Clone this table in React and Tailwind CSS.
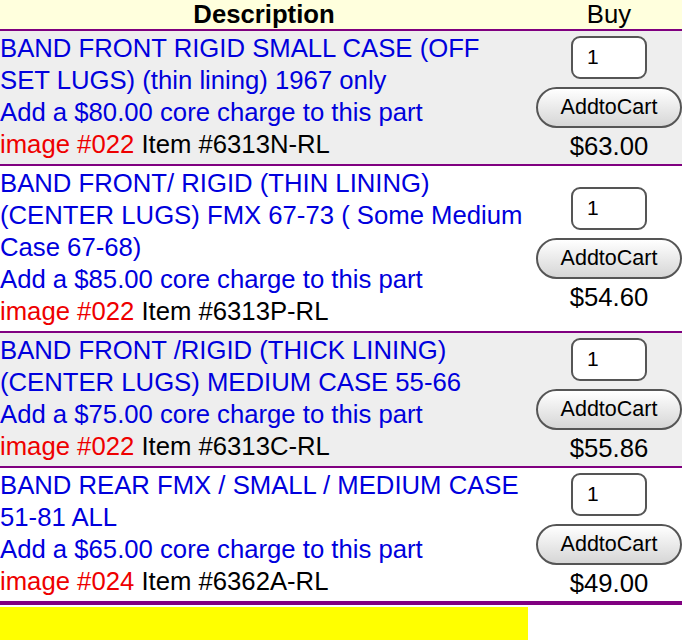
const items = [
  {
    title: 'BAND FRONT RIGID SMALL CASE (OFF SET LUGS) (thin lining) 1967 only',
    core: '80.00',
    image: '022',
    item: '6313N-RL',
    price: '63.00',
    shade: true,
  },
  {
    title: 'BAND FRONT/ RIGID (THIN LINING) (CENTER LUGS) FMX 67-73 ( Some Medium Case 67-68)',
    core: '85.00',
    image: '022',
    item: '6313P-RL',
    price: '54.60',
    shade: false,
  },
  {
    title: 'BAND FRONT /RIGID (THICK LINING) (CENTER LUGS) MEDIUM CASE 55-66',
    core: '75.00',
    image: '022',
    item: '6313C-RL',
    price: '55.86',
    shade: true,
  },
  {
    title: 'BAND REAR FMX / SMALL / MEDIUM CASE 51-81 ALL',
    core: '65.00',
    image: '024',
    item: '6362A-RL',
    price: '49.00',
    shade: false,
  },
]

function Row({ p }) {
  return (
    <div className={`grid grid-cols-[528px_1fr] border-b-2 border-[#800080] ${p.shade ? 'bg-[#eeeeee]' : 'bg-white'}`}>
      <div className="pt-[1px] pb-[4px] text-[25.7px] leading-[32px]">
        <div className="text-[#0000dd]">{p.title}</div>
        <div className="text-[#0000dd]">Add a ${p.core} core charge to this part</div>
        <div className="text-black">
          <span className="text-[#ee0000]">image #{p.image}</span> Item #{p.item}
        </div>
      </div>
      <div className="flex flex-col items-center justify-center pt-[4px] pb-[1px] pl-2">
        <input
          type="text"
          defaultValue="1"
          className="w-[76px] h-[43px] rounded-[9px] border-2 border-[#555] bg-white px-[14px] text-[21px] text-black outline-none"
        />
        <button className="mt-2 w-[146px] h-[41px] rounded-full border-2 border-[#555] bg-gradient-to-b from-white to-[#d6d6d6] text-[21.5px] text-black">
          AddtoCart
        </button>
        <div className="mt-[1px] text-[25.7px] leading-[34px] text-black">${p.price}</div>
      </div>
    </div>
  )
}

export default function App() {
  return (
    <div className="w-[682px] h-[640px] overflow-hidden bg-white font-['Liberation_Sans',Arial,sans-serif]">
      <div className="grid grid-cols-[528px_1fr] bg-[#ffffdd] border-b-2 border-[#800080] text-[25.7px] leading-[29px] text-black">
        <div className="text-center font-bold">Description</div>
        <div className="text-center pl-2">Buy</div>
      </div>
      {items.map((p) => (
        <Row key={p.item} p={p} />
      ))}
      <div className="h-[2px] bg-[#800080]" />
      <div className="mt-[2px] w-[528px] h-[40px] bg-[#ffff00]" />
    </div>
  )
}
